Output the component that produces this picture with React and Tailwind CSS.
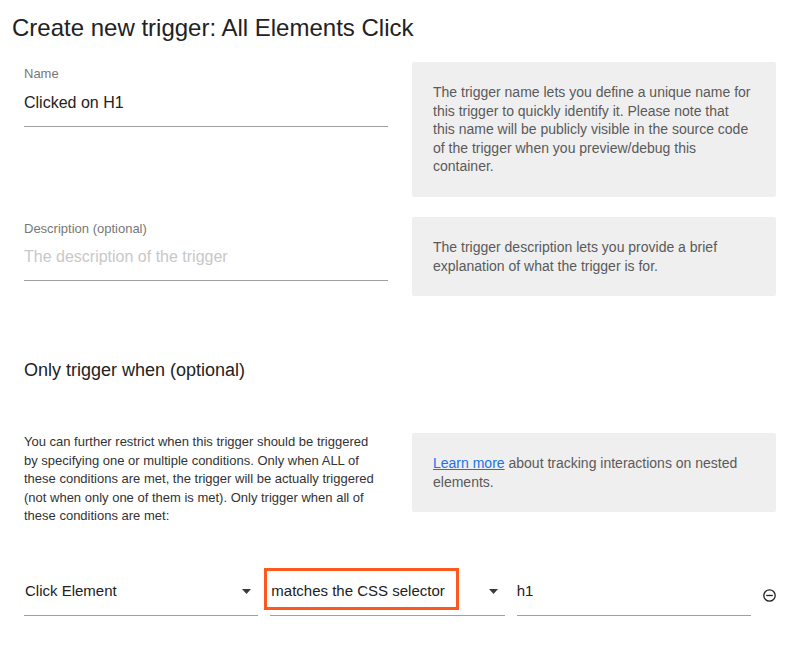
import React from 'react';

const font = { fontFamily: '"Liberation Sans", Arial, sans-serif' };

function InfoBox({ children, className = '' }) {
    return (
        <div className={`bg-[#efefef] rounded-[2px] px-[21px] flex items-center text-[14px] leading-[18.5px] text-[#5a5a5a] ${className}`}>
            <div>{children}</div>
        </div>
    );
}

function Caret() {
    return (
        <svg width="9" height="5" viewBox="0 0 9 5" className="shrink-0">
            <path d="M0 0h9L4.5 5z" fill="#3a3a3a" />
        </svg>
    );
}

function SelectField({ value, children }) {
    return (
        <div className="relative h-[48px] border-b border-[#a0a0a0] flex items-center justify-between pl-[1px] pr-[7px]">
            <span className="text-[15px] leading-[20px] text-[#212121]">{value}</span>
            <Caret />
            {children}
        </div>
    );
}

export default function App() {
    return (
        <div className="w-[795px] h-[645px] bg-white overflow-hidden" style={font}>
            {/* Titulo */}
            <h1 className="pl-[12px] pt-[12px] text-[24px] leading-[32px] text-[#222222]">
                Create new trigger: All Elements Click
            </h1>

            <div className="pl-[24px] pr-[19px] pt-[18px]">
                {/* Nombre */}
                <div className="grid grid-cols-2 gap-x-[24px]">
                    <div className="pt-[4px]">
                        <div className="text-[13px] leading-[16px] text-[#777777]">Name</div>
                        <div className="mt-[10px] h-[35px] border-b border-[#a0a0a0] text-[16px] leading-[22px] text-[#212121]">
                            Clicked on H1
                        </div>
                    </div>
                    <InfoBox className="h-[135px]">
                        The trigger name lets you define a unique name for this trigger to quickly identify it. Please note that this{'\u00a0'}name will be publicly visible in the source code of the trigger when you preview/debug this container.
                    </InfoBox>
                </div>

                {/* Descripcion */}
                <div className="grid grid-cols-2 gap-x-[24px] mt-[20px]">
                    <div className="pt-[4px]">
                        <div className="text-[13px] leading-[16px] text-[#777777]">Description (optional)</div>
                        <div className="mt-[9px] h-[35px] border-b border-[#a0a0a0] text-[16px] leading-[22px] text-[#c8c8c8]">
                            The description of the trigger
                        </div>
                    </div>
                    <InfoBox className="h-[79px]">
                        The trigger description lets you provide a brief explanation of what the trigger is for.
                    </InfoBox>
                </div>

                {/* Condiciones */}
                <h2 className="mt-[62px] text-[18px] leading-[24px] text-[#222222]">Only trigger when (optional)</h2>

                <div className="grid grid-cols-2 gap-x-[24px] mt-[51px]">
                    <p className="max-w-[356px] text-[13px] leading-[18.5px] text-[#333333]">
                        You can further restrict when this trigger should be triggered by specifying one or multiple conditions. Only when ALL of these conditions are met, the trigger will be actually triggered (not when only one of them is met). Only trigger when all of these conditions are met:
                    </p>
                    <InfoBox className="h-[79px]">
                        <a href="#" className="text-[#1a73e8] underline">Learn more</a> about tracking interactions on nested elements.
                    </InfoBox>
                </div>

                {/* Fila de condicion */}
                <div className="grid grid-cols-[1fr_1fr_1fr_13px] items-center gap-x-[12px] mt-[42px]">
                    <SelectField value="Click Element" />
                    <SelectField value="matches the CSS selector">
                        <div className="absolute left-[-6px] top-0 w-[195px] h-[42px] border-[3px] border-[#fc5a1c] pointer-events-none" />
                    </SelectField>
                    <div className="h-[48px] border-b border-[#a0a0a0] flex items-center text-[15px] leading-[20px] text-[#212121]">
                        h1
                    </div>
                    <svg width="13" height="13" viewBox="0 0 13 13" className="mt-[7px]">
                        <circle cx="6.5" cy="6.5" r="5.7" fill="none" stroke="#222222" strokeWidth="1.3" />
                        <path d="M3.2 6.5h6.6" stroke="#222222" strokeWidth="1.3" />
                    </svg>
                </div>
            </div>
        </div>
    );
}
